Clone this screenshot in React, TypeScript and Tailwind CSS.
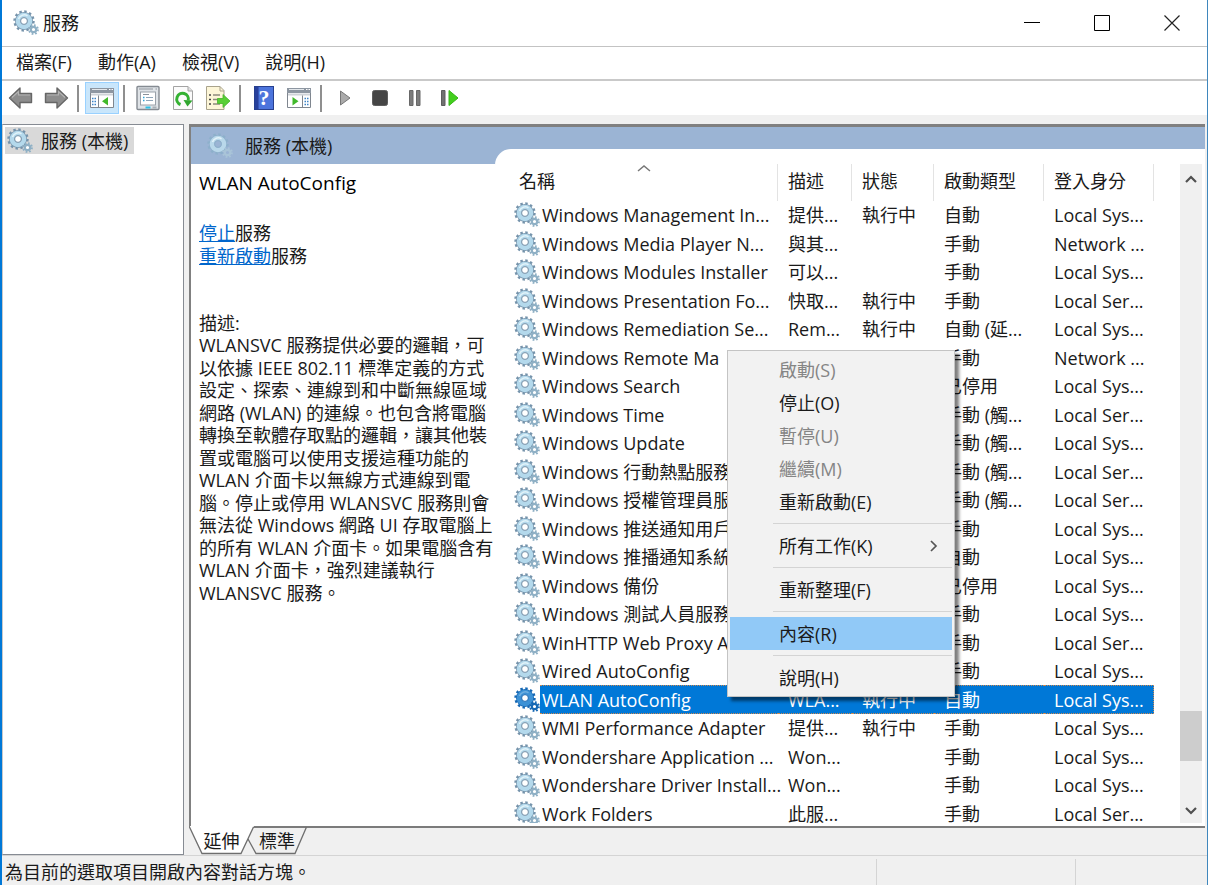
import type { ReactNode } from 'react';
import { clsx } from 'clsx';

interface Service {
  name: string;
  description: string;
  status: string;
  startup: string;
  logOn: string;
  selected?: boolean;
}

const SERVICES: Service[] = [
  { name: 'Windows Management In...', description: '提供...', status: '執行中', startup: '自動', logOn: 'Local Sys...' },
  { name: 'Windows Media Player N...', description: '與其...', status: '', startup: '手動', logOn: 'Network ...' },
  { name: 'Windows Modules Installer', description: '可以...', status: '', startup: '手動', logOn: 'Local Sys...' },
  { name: 'Windows Presentation Fo...', description: '快取...', status: '執行中', startup: '手動', logOn: 'Local Ser...' },
  { name: 'Windows Remediation Se...', description: 'Rem...', status: '執行中', startup: '自動 (延...', logOn: 'Local Sys...' },
  { name: 'Windows Remote Ma', description: '', status: '', startup: '手動', logOn: 'Network ...' },
  { name: 'Windows Search', description: '', status: '', startup: '已停用', logOn: 'Local Sys...' },
  { name: 'Windows Time', description: '', status: '', startup: '手動 (觸...', logOn: 'Local Ser...' },
  { name: 'Windows Update', description: '', status: '', startup: '手動 (觸...', logOn: 'Local Sys...' },
  { name: 'Windows 行動熱點服務', description: '', status: '', startup: '手動 (觸...', logOn: 'Local Ser...' },
  { name: 'Windows 授權管理員服', description: '', status: '', startup: '手動 (觸...', logOn: 'Local Ser...' },
  { name: 'Windows 推送通知用戶', description: '', status: '', startup: '手動', logOn: 'Local Sys...' },
  { name: 'Windows 推播通知系統', description: '', status: '', startup: '自動', logOn: 'Local Sys...' },
  { name: 'Windows 備份', description: '', status: '', startup: '已停用', logOn: 'Local Sys...' },
  { name: 'Windows 測試人員服務', description: '', status: '', startup: '手動', logOn: 'Local Sys...' },
  { name: 'WinHTTP Web Proxy A', description: '', status: '', startup: '手動', logOn: 'Local Ser...' },
  { name: 'Wired AutoConfig', description: '', status: '', startup: '手動', logOn: 'Local Sys...' },
  { name: 'WLAN AutoConfig', description: 'WLA...', status: '執行中', startup: '自動', logOn: 'Local Sys...', selected: true },
  { name: 'WMI Performance Adapter', description: '提供...', status: '執行中', startup: '手動', logOn: 'Local Sys...' },
  { name: 'Wondershare Application ...', description: 'Won...', status: '', startup: '手動', logOn: 'Local Sys...' },
  { name: 'Wondershare Driver Install...', description: 'Won...', status: '', startup: '手動', logOn: 'Local Sys...' },
  { name: 'Work Folders', description: '此服...', status: '', startup: '手動', logOn: 'Local Ser...' },
];

const DESCRIPTION = [
  'WLANSVC 服務提供必要的邏輯\uff0c可',
  '以依據 IEEE 802.11 標準定義的方式',
  '設定、探索、連線到和中斷無線區域',
  '網路 (WLAN) 的連線。也包含將電腦',
  '轉換至軟體存取點的邏輯\uff0c讓其他裝',
  '置或電腦可以使用支援這種功能的',
  'WLAN 介面卡以無線方式連線到電',
  '腦。停止或停用 WLANSVC 服務則會',
  '無法從 Windows 網路 UI 存取電腦上',
  '的所有 WLAN 介面卡。如果電腦含有',
  'WLAN 介面卡\uff0c強烈建議執行',
  'WLANSVC 服務。',
];

type MenuEntry = { label: string; disabled?: boolean; active?: boolean; submenu?: boolean } | 'separator';

const CONTEXT_MENU: MenuEntry[] = [
  { label: '啟動(S)', disabled: true },
  { label: '停止(O)' },
  { label: '暫停(U)', disabled: true },
  { label: '繼續(M)', disabled: true },
  { label: '重新啟動(E)' },
  'separator',
  { label: '所有工作(K)', submenu: true },
  'separator',
  { label: '重新整理(F)' },
  'separator',
  { label: '內容(R)', active: true },
  'separator',
  { label: '說明(H)' },
];

function GearIcon({ tone = 'normal' }: { tone?: 'normal' | 'selected' | 'header' }) {
  const body = tone === 'selected' ? '#3d92d6' : tone === 'header' ? '#b9d8ea' : '#b4d9ec';
  const edge = tone === 'selected' ? '#1668b4' : tone === 'header' ? '#8db0cb' : '#7593ab';
  const small = tone === 'selected' ? '#1668b4' : tone === 'header' ? '#a9c4d8' : '#8fb0c5';
  const hole = tone === 'header' ? '#9bb4d4' : '#ffffff';
  return (
    <svg width="26" height="26" viewBox="0 0 26 26" fill="none" className="block shrink-0">
      <circle cx="11" cy="11" r="9.4" stroke={edge} strokeWidth="2.6" strokeDasharray="2.4 2.52" />
      <circle cx="11" cy="11" r="6.2" stroke={edge} strokeWidth="5.6" />
      <circle cx="11" cy="11" r="6" stroke={body} strokeWidth="4.6" />
      <path d="M5.5 9a6 6 0 0 1 9-3.2" stroke="#e6f5fb" strokeWidth="1.6" opacity={tone === 'selected' ? 0.3 : 0.9} />
      <circle cx="11" cy="11" r="3.4" fill={hole} stroke={edge} strokeWidth="1" />
      <circle cx="20.5" cy="19.5" r="4.4" stroke={small} strokeWidth="2" strokeDasharray="1.7 1.75" />
      <circle cx="20.5" cy="19.5" r="2.7" fill={hole} stroke={small} strokeWidth="2.2" />
    </svg>
  );
}

function ArrowIcon({ direction }: { direction: 'left' | 'right' }) {
  return (
    <svg width="26" height="24" viewBox="0 0 26 24" fill="none">
      <path
        d={direction === 'left' ? 'M1.5 12 12 2v5.5h11.5v9H12V22z' : 'M24.5 12 14 2v5.5H2.5v9H14V22z'}
        fill="#8d8d8d"
        stroke="#666"
        strokeWidth="1.4"
        strokeLinejoin="round"
      />
      <path
        d={direction === 'left' ? 'M4 11.5 10.5 5.5V9H22' : 'M22 11.5 15.5 5.5V9H4'}
        stroke="#b3b3b3"
        strokeWidth="1.2"
      />
    </svg>
  );
}

function PaneIcon({ mirrored = false }: { mirrored?: boolean }) {
  return (
    <svg width="26" height="22" viewBox="0 0 26 22" fill="none">
      <path d="M1.5 1.5h23v19h-23z" fill="#fff" stroke="#7f868f" />
      <path d="M1 1h24v5H1z" fill="#8d96a1" />
      <path d="M3 2.5h15" stroke="#e3e7eb" />
      <path d="M20 2.5h1.5M22.5 2.5H24" stroke="#fff" />
      <path d="M2 6.5h22v2H2z" fill="#cfd3d8" />
      {mirrored ? (
        <>
          <path d="M16.5 8.5v12" stroke="#7f868f" />
          <path d="M18.5 11.5h5M18.5 14.5h5M18.5 17.5h5" stroke="#3c83c7" strokeWidth="1.4" strokeDasharray="1.5 1" />
          <path d="m6.5 10 6 4.2-6 4.3z" fill="#41b92b" />
        </>
      ) : (
        <>
          <path d="M9.5 8.5v12" stroke="#7f868f" />
          <path d="M3 11.5h5M3 14.5h5M3 17.5h5" stroke="#3c83c7" strokeWidth="1.4" strokeDasharray="1.5 1" />
          <path d="m19 10-6 4.2 6 4.3z" fill="#41b92b" />
        </>
      )}
    </svg>
  );
}

function PropertiesIcon() {
  return (
    <svg width="24" height="26" viewBox="0 0 24 26" fill="none">
      <rect x="1" y="1.5" width="22" height="23" rx="1" fill="#dfe3e7" stroke="#858b92" strokeWidth="1.4" />
      <path d="M3 4h14M19.5 4H21" stroke="#8f969e" strokeWidth="1.2" />
      <rect x="4.5" y="7" width="15" height="13" fill="#fff" stroke="#9aa1a9" />
      <path d="M7 9.5h6" stroke="#8a929b" />
      <path d="M7 12.5h1.5M7 15.5h1.5" stroke="#32a5d8" strokeWidth="1.5" />
      <path d="M10 12.5h7M10 15.5h7" stroke="#8fa5b8" />
      <path d="M9.500 22.5h5" stroke="#2cc0e6" strokeWidth="2" />
      <path d="M16.5 22.5h4" stroke="#a9b0b7" strokeWidth="2" />
    </svg>
  );
}

function RefreshIcon() {
  return (
    <svg width="22" height="26" viewBox="0 0 22 26" fill="none">
      <path d="M1.5 1.5H16L20.5 6v18.5h-19z" fill="#fbfbfb" stroke="#a3a3a3" />
      <path d="M16 1.5V6h4.5" fill="#e2e2e2" stroke="#a3a3a3" />
      <path d="M8.500 19.5A5.800 5.800 0 1 1 16.200 15.500" stroke="#35b233" strokeWidth="3" />
      <path d="m11.500 15 9 .5-5 6z" fill="#2fa62e" />
    </svg>
  );
}

function ExportIcon() {
  return (
    <svg width="26" height="26" viewBox="0 0 26 26" fill="none">
      <path d="M1.5 1.5H15l4 4v19H1.5z" fill="#fdf6d8" stroke="#a9a38c" />
      <path d="M15 1.5V6h4" stroke="#a9a38c" />
      <path d="M4 10h2M4 14.5h2M4 19h2" stroke="#444" strokeWidth="1.6" />
      <path d="M8 10h7M8 14.5h6M8 19h7" stroke="#8e8a7c" strokeWidth="1.3" />
      <path d="M12.5 13.500H18V9.500l7 6.500-7 6.500v-4h-5.500z" fill="#58cf35" stroke="#45b32a" strokeWidth=".8" />
    </svg>
  );
}

function HelpIcon() {
  return (
    <span className="flex h-6 w-5 items-center justify-center border border-[#27408f] bg-linear-to-r from-[#27409c] from-15% to-[#4c74dc] to-25% font-['Liberation_Serif',serif] text-[22px] leading-6 font-bold text-white">
      ?
    </span>
  );
}

function ToolButton({ label, active, children }: { label: string; active?: boolean; children: ReactNode }) {
  return (
    <button
      aria-label={label}
      className={clsx(
        'flex h-8 w-[34px] items-center justify-center',
        active && 'border border-[#99d1ff] bg-[#c9e6fb]',
      )}
    >
      {children}
    </button>
  );
}

function ToolSeparator() {
  return <span className="mr-[5px] ml-[3px] h-[27px] w-[2px] bg-[#8f8f8f]" />;
}

function TitleBar() {
  return (
    <header className="flex h-[47px] shrink-0 items-center border-b border-[#c3c3c3] bg-white">
      <div className="flex flex-1 items-center gap-1 pl-[11px]">
        <GearIcon />
        <h1>服務</h1>
      </div>
      <button aria-label="最小化" className="flex h-full w-[70px] items-center justify-center">
        <svg width="16" height="16" stroke="#000" fill="none">
          <path d="M0 7.5h16" />
        </svg>
      </button>
      <button aria-label="最大化" className="flex h-full w-[70px] items-center justify-center">
        <svg width="16" height="16" stroke="#000" fill="none">
          <path d="M.5.5h15v15H.5z" />
        </svg>
      </button>
      <button aria-label="關閉" className="flex h-full w-[70px] items-center justify-center">
        <svg width="16" height="16" stroke="#222" strokeWidth="1.2" fill="none">
          <path d="m.5.5 15 15M15.5.5l-15 15" />
        </svg>
      </button>
    </header>
  );
}

function Toolbar() {
  return (
    <div className="flex h-[34px] shrink-0 items-center gap-px bg-white pl-[2px]">
      <ToolButton label="上一步"><ArrowIcon direction="left" /></ToolButton>
      <ToolButton label="下一步"><ArrowIcon direction="right" /></ToolButton>
      <ToolSeparator />
      <ToolButton label="顯示/隱藏主控台樹狀目錄" active><PaneIcon /></ToolButton>
      <ToolSeparator />
      <ToolButton label="內容"><PropertiesIcon /></ToolButton>
      <ToolButton label="重新整理"><RefreshIcon /></ToolButton>
      <ToolButton label="匯出清單"><ExportIcon /></ToolButton>
      <ToolSeparator />
      <ToolButton label="說明"><HelpIcon /></ToolButton>
      <ToolButton label="顯示/隱藏執行窗格"><PaneIcon mirrored /></ToolButton>
      <ToolSeparator />
      <ToolButton label="啟動服務">
        <svg width="12" height="16" viewBox="0 0 12 16"><path d="M1.5 1v14L11 8z" fill="#aaa" stroke="#777" /></svg>
      </ToolButton>
      <ToolButton label="停止服務">
        <svg width="16" height="16" viewBox="0 0 16 16"><rect x=".5" y=".5" width="15" height="15" rx="2" fill="#454545" stroke="#5e5e5e" /></svg>
      </ToolButton>
      <ToolButton label="暫停服務">
        <svg width="14" height="16" viewBox="0 0 14 16"><path d="M1.5.5H5v15H1.5zM8.5.5H12v15H8.5z" fill="#7c7c7c" stroke="#686868" /></svg>
      </ToolButton>
      <ToolButton label="重新啟動服務">
        <svg width="18" height="16" viewBox="0 0 18 16">
          <path d="M.5.5H4v15H.5z" fill="#707070" stroke="#5c5c5c" />
          <path d="M8 .5v15L17 8z" fill="#43cf1e" stroke="#36b516" />
        </svg>
      </ToolButton>
    </div>
  );
}

function DetailPane() {
  return (
    <section className="flex w-[304px] shrink-0 flex-col">
      <div className="flex h-[37px] shrink-0 items-center gap-3 pl-4">
        <GearIcon tone="header" />
        <span>服務 (本機)</span>
      </div>
      <div className="flex-1 bg-white pl-2 whitespace-nowrap">
        <h2 className="pt-[7px] text-[19px] leading-6 font-medium text-black">WLAN AutoConfig</h2>
        <div className="mt-[27px] leading-[23px]">
          <p><a href="#stop" className="text-[#0066cc] underline">停止</a>服務</p>
          <p><a href="#restart" className="text-[#0066cc] underline">重新啟動</a>服務</p>
        </div>
        <p className="mt-11 leading-[22px]">描述:</p>
        <p>
          {DESCRIPTION.map((line) => (
            <span key={line} className="block odd:leading-[23px] even:leading-[22px]">{line}</span>
          ))}
        </p>
      </div>
    </section>
  );
}

function ServiceTable() {
  const head = 'h-[35px] border-r border-[#e3e3e3] p-0 pl-[10px] text-left font-normal';
  return (
    <table className="w-full table-fixed border-separate border-spacing-0 whitespace-nowrap">
      <colgroup>
        <col className="w-[29px]" />
        <col />
        <col className="w-[74px]" />
        <col className="w-[82px]" />
        <col className="w-[110px]" />
        <col className="w-[110px]" />
      </colgroup>
      <thead>
        <tr className="h-[37px] align-top leading-[35px]">
          <th colSpan={2} className="relative h-[35px] border-r border-[#e3e3e3] p-0 pl-2 text-left font-normal">
            名稱
            <span className="absolute inset-x-0 top-0 flex justify-center">
              <svg width="14" height="8" viewBox="0 0 14 8" fill="none">
                <path d="m1 7 6-5 6 5" stroke="#777" strokeWidth="1.5" />
              </svg>
            </span>
          </th>
          <th className={head}>描述</th>
          <th className={head}>狀態</th>
          <th className={head}>啟動類型</th>
          <th className={head}>登入身分</th>
        </tr>
      </thead>
      <tbody className="leading-[26px]">
        {SERVICES.map((service) => {
          const tint = service.selected && 'border-y border-dotted border-[#d08a50] bg-[#0078d7] text-white';
          const cell = clsx('p-0 pl-[10px]', tint);
          return (
            <tr key={service.name} className="odd:h-7 even:h-[29px]">
              <td className="p-0 pl-[3px]"><GearIcon tone={service.selected ? 'selected' : 'normal'} /></td>
              <td className={clsx('p-0 pl-[2px]', tint)}>{service.name}</td>
              <td className={cell}>{service.description}</td>
              <td className={cell}>{service.status}</td>
              <td className={cell}>{service.startup}</td>
              <td className={clsx(cell, service.selected && 'border-r')}>{service.logOn}</td>
            </tr>
          );
        })}
      </tbody>
    </table>
  );
}

function ScrollBar() {
  return (
    <div className="flex w-[22px] shrink-0 flex-col bg-[#f0f0f0]">
      <button aria-label="向上捲動" className="flex h-[30px] items-center justify-center">
        <svg width="12" height="8" viewBox="0 0 12 8" fill="none"><path d="m1 7 5-5 5 5" stroke="#505050" strokeWidth="2.2" /></svg>
      </button>
      <span className="flex-1" />
      <span className="h-[50px] bg-[#cdcdcd]" />
      <span className="h-[38px]" />
      <button aria-label="向下捲動" className="flex h-6 items-center justify-center">
        <svg width="12" height="8" viewBox="0 0 12 8" fill="none"><path d="m1 1 5 5 5-5" stroke="#505050" strokeWidth="2.2" /></svg>
      </button>
    </div>
  );
}

function ViewTabs() {
  return (
    <div className="flex h-[29px] shrink-0">
      <button className="relative z-10 h-full w-[65px]">
        <svg width="65" height="29" viewBox="0 0 65 29" fill="none" className="absolute inset-0">
          <path d="M0 0h65L52 27.5H13z" fill="#fff" />
          <path d="m0 0 13 27.5h39L64.5 1" stroke="#6e6e6e" strokeWidth="1.3" />
        </svg>
        <span className="relative">延伸</span>
      </button>
      <button className="relative -ml-[7px] h-full w-[60px]">
        <svg width="60" height="29" viewBox="0 0 60 29" fill="none" className="absolute inset-0">
          <path d="m1 13 8 14.5h39L59.5 1" stroke="#6e6e6e" strokeWidth="1.3" />
        </svg>
        <span className="relative">標準</span>
      </button>
      <span className="-ml-[55px] flex-1 border-t-2 border-[#7b7b7b]" />
    </div>
  );
}

function ContextMenu() {
  return (
    <div
      role="menu"
      className="absolute top-[350px] left-[725px] z-20 w-[228px] border border-[#c4c4c4] bg-[#f2f2f2] p-[2px] shadow-[4px_4px_3px_rgba(0,0,0,0.5)]"
    >
      {CONTEXT_MENU.map((entry, i) =>
        entry === 'separator' ? (
          <div key={i} className="flex h-[11px] items-center pl-[43px]">
            <span className="h-px flex-1 bg-[#d4d4d4]" />
          </div>
        ) : (
          <button
            key={i}
            role="menuitem"
            disabled={entry.disabled}
            className={clsx(
              'flex h-[33px] w-full items-center justify-between pr-[14px] pl-[49px]',
              entry.disabled && 'text-[#858585]',
              entry.active && 'bg-[#91c9f7]',
            )}
          >
            {entry.label}
            {entry.submenu && (
              <svg width="8" height="12" viewBox="0 0 8 12" fill="none">
                <path d="m1 1 5 5-5 5" stroke="#555" strokeWidth="1.7" />
              </svg>
            )}
          </button>
        ),
      )}
    </div>
  );
}

export default function App() {
  return (
    <div
      lang="zh-Hant"
      className="relative mr-px flex h-screen flex-col overflow-hidden border-r border-l-2 border-r-[#3f87bd] border-l-[#0078d7] bg-[#f0f0f0] font-['Open_Sans','Noto_Sans_CJK_TC',sans-serif] text-[18px] leading-6 text-[#1a1a1a]"
    >
      <TitleBar />
      <nav className="flex h-[34px] shrink-0 items-start gap-[26px] border-b-2 border-[#c9c9c9] bg-white pt-[3px] pl-[14px]">
        <button>檔案(F)</button>
        <button>動作(A)</button>
        <button>檢視(V)</button>
        <button>說明(H)</button>
      </nav>
      <Toolbar />

      <main className="flex min-h-0 flex-1 gap-[5px] pt-[9px] pr-[2px]">
        <aside className="w-[182px] shrink-0 border border-[#868b93] border-l-[#c8c8c8] bg-white">
          <div className="mt-[2px] ml-[2px] flex h-[27px] w-fit items-center gap-2 bg-[#d9d9d9] pr-[6px] pl-[2px]">
            <GearIcon />
            服務 (本機)
          </div>
        </aside>

        <div className="flex min-w-0 flex-1 flex-col">
          <div className="flex min-h-0 flex-1 border-t-[3px] border-l-2 border-[#808080] bg-[#9bb4d4]">
            <DetailPane />
            <div className="mt-[22px] flex min-w-0 flex-1 rounded-tl-[16px] bg-white pt-[15px] pr-[3px] pb-[3px] pl-4">
              <div className="min-w-0 flex-1 overflow-hidden pr-[26px]">
                <ServiceTable />
              </div>
              <ScrollBar />
            </div>
          </div>
          <ViewTabs />
        </div>
      </main>

      <footer className="flex h-[30px] shrink-0 border-t border-[#d4d4d4] pr-1">
        <p className="flex-1 pl-[3px] leading-[33px]">為目前的選取項目開啟內容對話方塊。</p>
        <span className="mt-[3px] w-[199px] border-l border-[#d4d4d4]" />
        <span className="mt-[3px] w-[128px] border-l border-[#d4d4d4]" />
      </footer>

      <ContextMenu />
    </div>
  );
}
